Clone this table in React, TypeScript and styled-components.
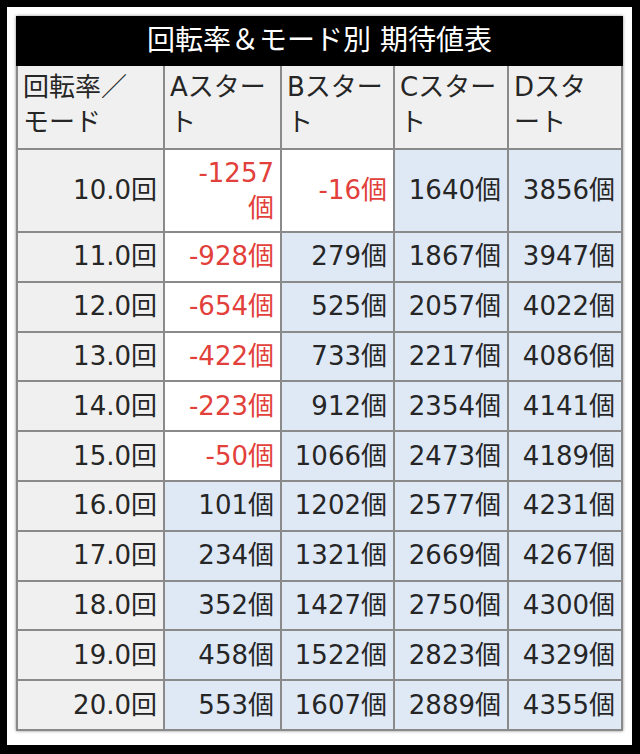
import React from 'react';
import styled, { createGlobalStyle } from 'styled-components';

const GlobalStyle = createGlobalStyle`
  html, body {
    margin: 0;
    padding: 0;
    background: #000;
  }
  body {
    font-family: "DejaVu Sans", "Noto Sans CJK JP", sans-serif;
  }
`;

const rows: [string, number[]][] = [
  ['10.0回', [-1257, -16, 1640, 3856]],
  ['11.0回', [-928, 279, 1867, 3947]],
  ['12.0回', [-654, 525, 2057, 4022]],
  ['13.0回', [-422, 733, 2217, 4086]],
  ['14.0回', [-223, 912, 2354, 4141]],
  ['15.0回', [-50, 1066, 2473, 4189]],
  ['16.0回', [101, 1202, 2577, 4231]],
  ['17.0回', [234, 1321, 2669, 4267]],
  ['18.0回', [352, 1427, 2750, 4300]],
  ['19.0回', [458, 1522, 2823, 4329]],
  ['20.0回', [553, 1607, 2889, 4355]],
];

const heads = ['回転率／\nモード', 'Aスター\nト', 'Bスター\nト', 'Cスター\nト', 'Dスタ\nート'];
const widths = [147, 117, 113, 114, 114];

// the one value that wraps in the original
const label = (v: number) => (v <= -1000 ? `${v}\n個` : `${v}個`);

function App() {
  return (
    <>
      <GlobalStyle />
      <Frame>
        <Table>
          <colgroup>
            {widths.map((w, i) => (
              <col key={i} style={{ width: w }} />
            ))}
          </colgroup>
          <thead>
            <tr>
              <Title colSpan={5}>回転率＆モード別 期待値表</Title>
            </tr>
            <tr>
              {heads.map((h) => (
                <Head key={h}>{h}</Head>
              ))}
            </tr>
          </thead>
          <tbody>
            {rows.map(([rate, vals], r) => (
              <Row key={rate} $tall={r === 0}>
                <RateCell>{rate}</RateCell>
                {vals.map((v, i) => (
                  <ValueCell key={i} $minus={v < 0}>
                    {label(v)}
                  </ValueCell>
                ))}
              </Row>
            ))}
          </tbody>
        </Table>
      </Frame>
    </>
  );
}

const Frame = styled.div`
  margin: 7px 8px 9px 7px;
  height: 738px;
  background: #fff;
  padding: 9px 0 0 9px;
  box-sizing: border-box;
`;

const Table = styled.table`
  width: 605px;
  table-layout: fixed;
  border-collapse: collapse;
  box-shadow: 0 0 3px rgba(0, 0, 0, 0.45);
  font-size: 26px;
  color: #262626;

  td, th {
    border: 2px solid #8a8a8a;
    line-height: 35px;
    padding: 4px 6px 4px 5px;
    white-space: pre-line;
    overflow: hidden;
  }
`;

const Title = styled.th`
  && {
    background: #000;
    color: #fff;
    font-size: 28px;
    font-weight: normal;
    text-align: center;
    height: 40px;
    line-height: 40px;
    padding: 3px 0 3px;
    border-color: #000;
  }
`;

const Head = styled.th`
  background: #f0f0f0;
  font-weight: normal;
  text-align: left;
  vertical-align: top;
  height: 74px;
  padding-top: 6px;
`;

const Row = styled.tr<{ $tall?: boolean }>`
  height: ${(p) => (p.$tall ? 83 : 49.8)}px;
`;

const RateCell = styled.td`
  background: #f0f0f0;
  text-align: right;
  vertical-align: middle;
`;

const ValueCell = styled.td<{ $minus?: boolean }>`
  text-align: right;
  vertical-align: middle;
  background: ${(p) => (p.$minus ? '#fff' : '#dfe9f6')};
  color: ${(p) => (p.$minus ? '#e2403a' : '#262626')};
`;

export default App;
